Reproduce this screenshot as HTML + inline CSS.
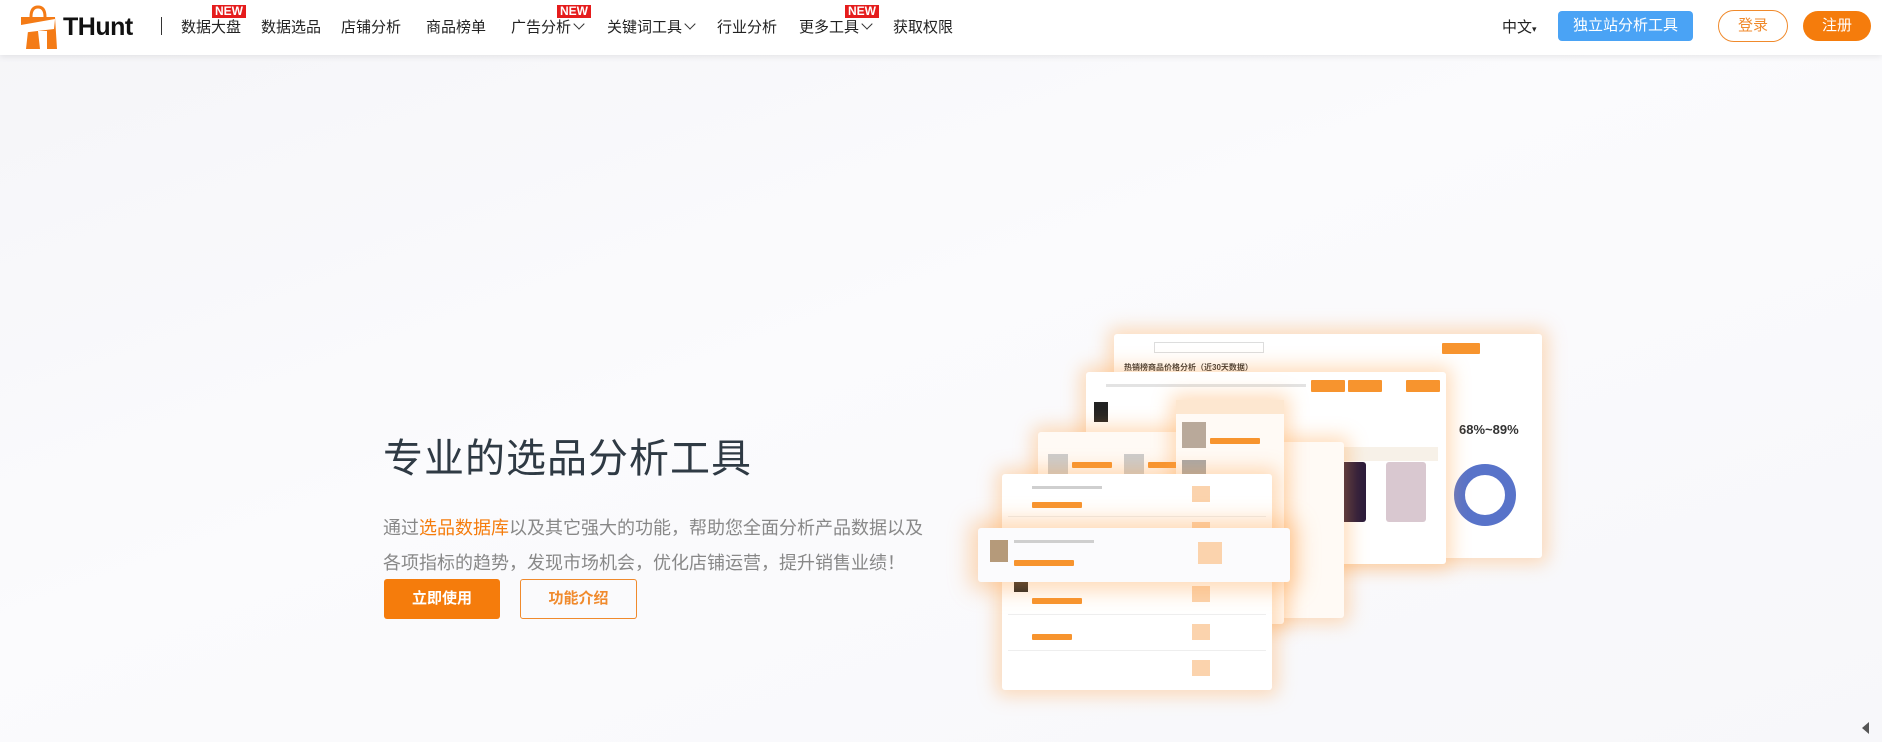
<!DOCTYPE html>
<html><head><meta charset="utf-8">
<style>
*{margin:0;padding:0;box-sizing:border-box}
body{width:1882px;height:742px;overflow:hidden;font-family:"Liberation Sans","Noto Sans CJK SC",sans-serif;background:linear-gradient(160deg,#f5f5f8 0%,#fbfbfd 45%,#f7f7fa 100%);position:relative}
.nav{position:absolute;left:0;top:0;width:1882px;height:55px;background:#fff;box-shadow:0 2px 6px rgba(0,0,0,.08)}
.nav .it{position:absolute;top:16px;font-size:15px;color:#222;white-space:nowrap}
.new{position:absolute;top:5px;background:#e51c1c;color:#fff;font-size:12px;line-height:13px;padding:0 3px;font-weight:bold}
.chev{display:inline-block;width:8px;height:8px;border-right:1.3px solid #333;border-bottom:1.3px solid #333;transform:rotate(45deg);margin-left:4px;position:relative;top:-4px}
.btn{position:absolute;font-size:15px;text-align:center}
.card{position:absolute;background:#fff;border-radius:3px;box-shadow:0 0 18px 6px rgba(255,160,70,.35)}
.row{position:absolute;left:6px;right:6px;height:1px;background:#eee}
.chip{position:absolute;height:6px;background:#f7942e;border-radius:1px}
.ln{position:absolute;height:3px;background:#cfcfcf}
</style></head><body>
<div class="nav">
  <svg style="position:absolute;left:18px;top:5px" width="40" height="46" viewBox="0 0 40 46">
    <path d="M13 12 Q13 2 20 2 Q27 2 27 12" fill="none" stroke="#f47b16" stroke-width="3"/>
    <path d="M3 12 H37 L39 44 H29 V26 H20 L22 44 H8 L10 26 H3 Z" fill="#f47b16"/>
    <path d="M3 20 L37 14 L36 24 L3 28Z" fill="#fff"/>
  </svg>
  <div style="position:absolute;left:63px;top:13px;font-size:25px;font-weight:bold;color:#111;letter-spacing:-.5px">THunt</div>
  <div style="position:absolute;left:161px;top:17px;width:1px;height:18px;background:#333"></div>
  <div class="it" style="left:181px">数据大盘</div><div class="new" style="left:212px">NEW</div>
  <div class="it" style="left:261px">数据选品</div>
  <div class="it" style="left:341px">店铺分析</div>
  <div class="it" style="left:426px">商品榜单</div>
  <div class="it" style="left:511px">广告分析<span class="chev"></span></div><div class="new" style="left:557px">NEW</div>
  <div class="it" style="left:607px">关键词工具<span class="chev"></span></div>
  <div class="it" style="left:717px">行业分析</div>
  <div class="it" style="left:799px">更多工具<span class="chev"></span></div><div class="new" style="left:845px">NEW</div>
  <div class="it" style="left:893px">获取权限</div>
  <div class="it" style="left:1502px">中文<span style="font-size:9px">▾</span></div>
  <div class="btn" style="left:1558px;top:11px;width:135px;height:30px;line-height:30px;background:#4aa3f5;color:#fff;border-radius:4px">独立站分析工具</div>
  <div class="btn" style="left:1718px;top:10px;width:70px;height:32px;line-height:30px;border:1px solid #f08a2c;color:#f08a2c;border-radius:16px">登录</div>
  <div class="btn" style="left:1803px;top:11px;width:68px;height:30px;line-height:30px;background:#f57c0c;color:#fff;border-radius:15px">注册</div>
</div>

<div style="position:absolute;left:383px;top:426px;font-size:40px;color:#2f3a44;letter-spacing:1px">专业的选品分析工具</div>
<div style="position:absolute;left:383px;top:511px;font-size:18px;color:#888;line-height:35px;white-space:nowrap">通过<span style="color:#f57c0c">选品数据库</span>以及其它强大的功能，帮助您全面分析产品数据以及<br>各项指标的趋势，发现市场机会，优化店铺运营，提升销售业绩！</div>
<div class="btn" style="left:384px;top:579px;width:116px;height:40px;line-height:40px;background:#f57c0c;color:#fff;border-radius:3px;font-weight:bold;font-size:15px">立即使用</div>
<div class="btn" style="left:520px;top:579px;width:117px;height:40px;line-height:38px;border:1px solid #f08a2c;color:#f08a2c;border-radius:3px;font-weight:bold;font-size:15px">功能介绍</div>

<!-- illustration -->
<div class="card" style="left:1114px;top:334px;width:428px;height:224px">
  <div style="position:absolute;left:40px;top:8px;width:110px;height:11px;border:1px solid #ddd"></div>
  <div class="chip" style="left:328px;top:9px;width:38px;height:11px"></div>
  <div style="position:absolute;left:10px;top:28px;font-size:8px;color:#333;font-weight:bold">热销榜商品价格分析（近30天数据）</div>
  <div style="position:absolute;left:345px;top:88px;font-size:13px;color:#333;font-weight:bold">68%~89%</div>
  <div style="position:absolute;left:340px;top:130px;width:62px;height:62px;border-radius:50%;border:11px solid #5873c9"></div>
</div>
<div class="card" style="left:1086px;top:372px;width:360px;height:192px">
  <div class="ln" style="left:20px;top:12px;width:200px;background:#e3e3e3"></div>
  <div class="chip" style="left:225px;top:8px;width:34px;height:12px"></div>
  <div class="chip" style="left:262px;top:8px;width:34px;height:12px"></div>
  <div class="chip" style="left:320px;top:8px;width:34px;height:12px"></div>
  <div style="position:absolute;left:8px;top:30px;width:14px;height:20px;background:#222"></div>
  <div style="position:absolute;left:8px;top:75px;right:8px;height:14px;background:#f7f1e8"></div>
  <div style="position:absolute;left:250px;top:90px;width:30px;height:60px;background:#2a1a3a;border-radius:3px"></div>
  <div style="position:absolute;left:300px;top:90px;width:40px;height:60px;background:#d9c8d0;border-radius:3px"></div>
</div>
<div class="card" style="left:1272px;top:442px;width:72px;height:176px;background:#fffaf5"></div>
<div class="card" style="left:1038px;top:432px;width:162px;height:96px;background:#fffaf5">
  <div style="position:absolute;left:10px;top:22px;width:20px;height:20px;background:#ccc"></div>
  <div style="position:absolute;left:86px;top:22px;width:20px;height:20px;background:#ccc"></div>
  <div class="chip" style="left:34px;top:30px;width:40px"></div><div class="chip" style="left:110px;top:30px;width:40px"></div>
</div>
<div class="card" style="left:1176px;top:400px;width:108px;height:224px;background:#fffaf5">
  <div style="position:absolute;left:0;right:0;top:0;height:14px;background:#fde7d0"></div>
  <div style="position:absolute;left:6px;top:22px;width:24px;height:26px;background:#b9a99a"></div>
  <div style="position:absolute;left:6px;top:60px;width:24px;height:26px;background:#a8a8a8"></div>
  <div class="chip" style="left:34px;top:38px;width:50px"></div><div class="chip" style="left:34px;top:76px;width:50px"></div>
</div>
<div class="card" style="left:1002px;top:474px;width:270px;height:216px">
  <div class="row" style="top:42px"></div><div class="row" style="top:140px"></div><div class="row" style="top:176px"></div>
  <div style="position:absolute;left:190px;top:12px;width:18px;height:16px;background:#fbd3ad"></div>
  <div style="position:absolute;left:190px;top:48px;width:18px;height:16px;background:#fbd3ad"></div>
  <div style="position:absolute;left:190px;top:112px;width:18px;height:16px;background:#fbd3ad"></div>
  <div style="position:absolute;left:190px;top:150px;width:18px;height:16px;background:#fbd3ad"></div>
  <div style="position:absolute;left:190px;top:186px;width:18px;height:16px;background:#fbd3ad"></div>
  <div style="position:absolute;left:12px;top:100px;width:14px;height:18px;background:#222"></div>
  <div class="chip" style="left:30px;top:28px;width:50px"></div><div class="chip" style="left:30px;top:124px;width:50px"></div><div class="chip" style="left:30px;top:160px;width:40px"></div>
  <div class="ln" style="left:30px;top:12px;width:70px"></div><div class="ln" style="left:30px;top:104px;width:70px"></div>
</div>
<div class="card" style="left:978px;top:528px;width:312px;height:54px;background:#fbfbfd;box-shadow:0 0 22px 8px rgba(255,160,70,.4)">
  <div style="position:absolute;left:12px;top:12px;width:18px;height:22px;background:#b59a7a"></div>
  <div class="ln" style="left:36px;top:12px;width:80px"></div>
  <div class="chip" style="left:36px;top:32px;width:60px"></div>
  <div style="position:absolute;left:220px;top:14px;width:24px;height:22px;background:#fbd3ad"></div>
</div>
<div style="position:absolute;left:1862px;top:722px;width:0;height:0;border-top:6px solid transparent;border-bottom:6px solid transparent;border-right:7px solid #555"></div>
</body></html>
